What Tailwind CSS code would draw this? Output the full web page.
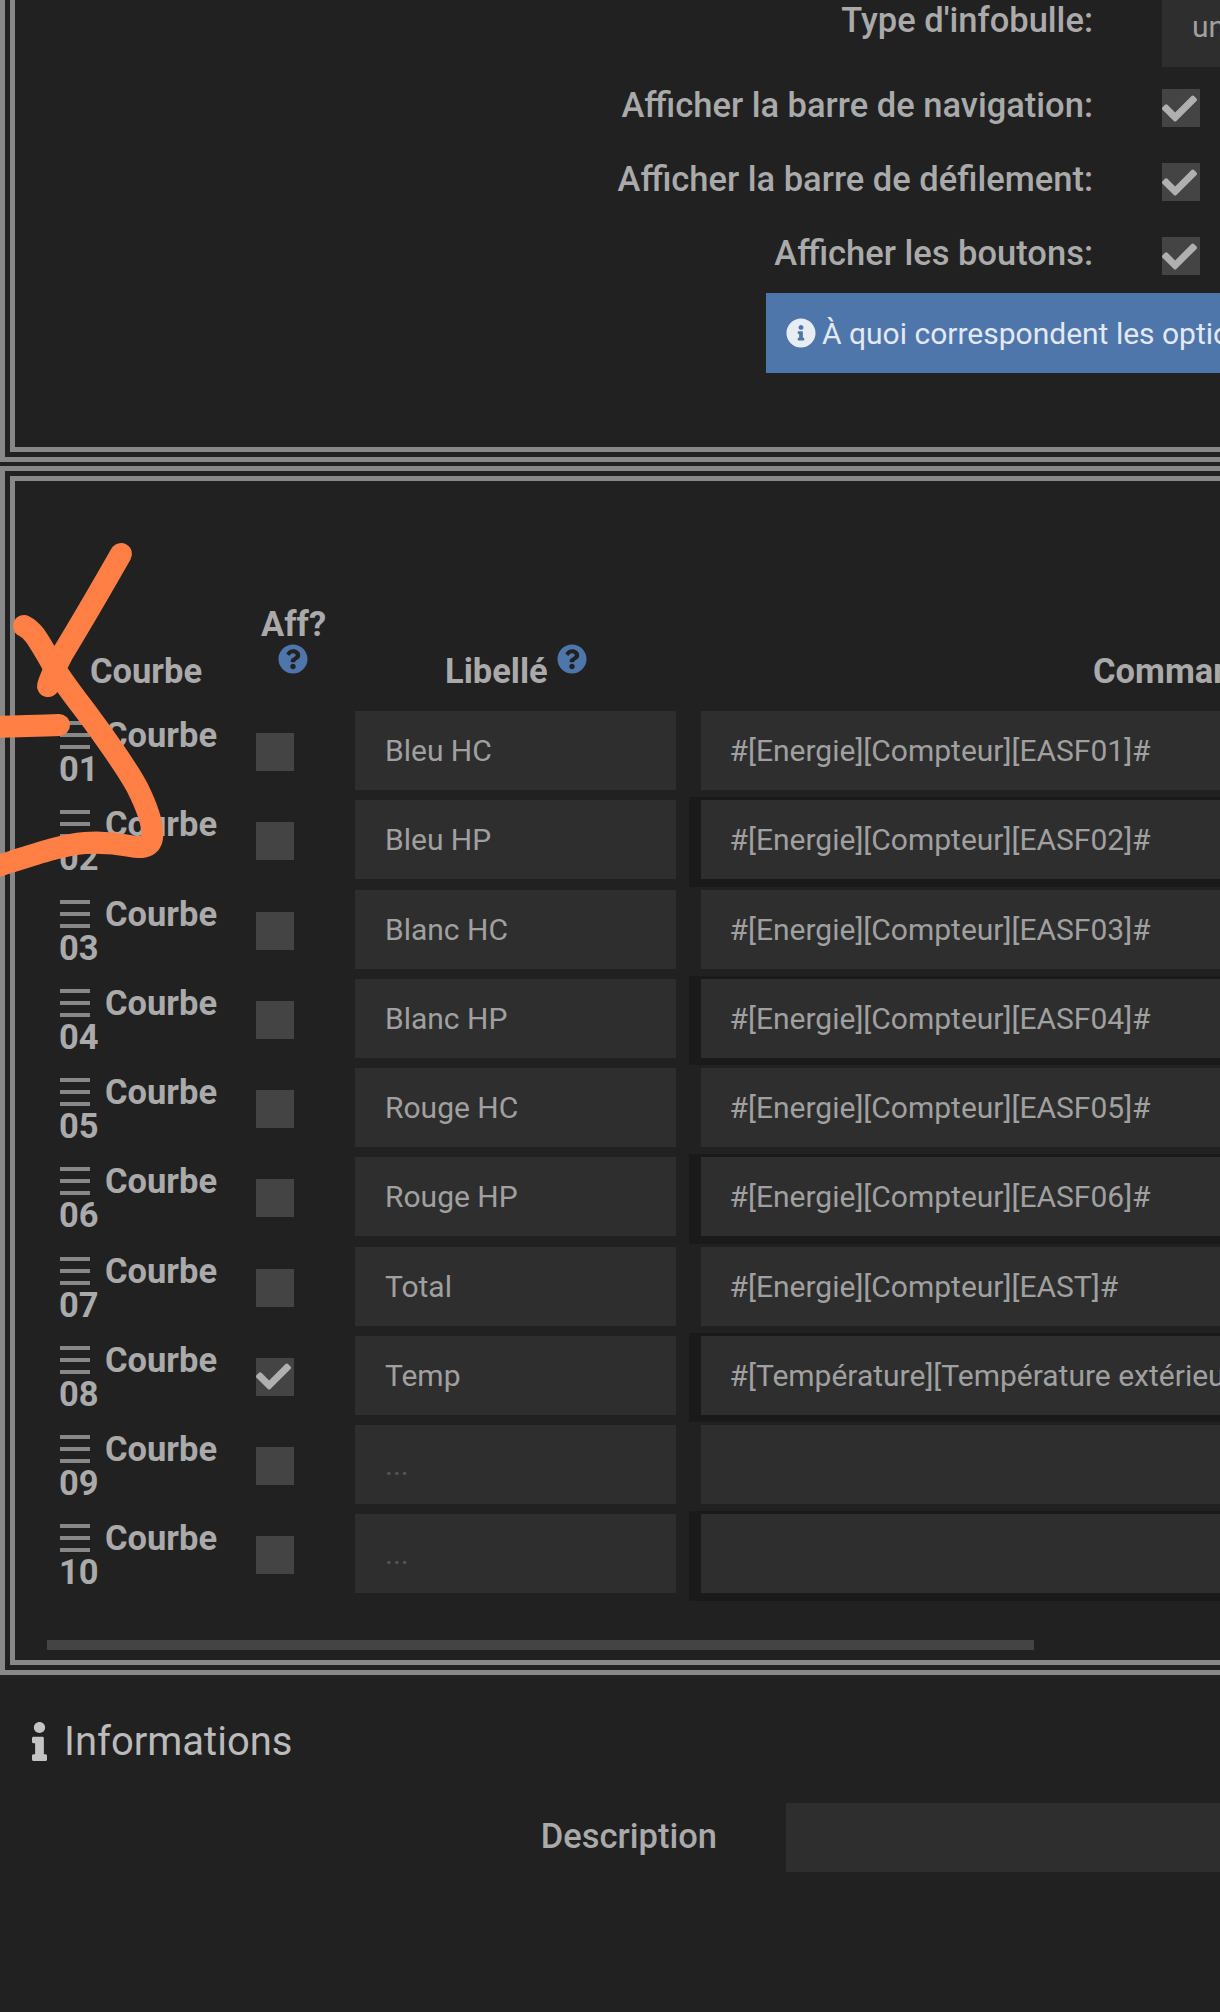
<!DOCTYPE html>
<html lang="fr">
<head>
    <meta charset="UTF-8">
    <title>Courbes</title>
    <script src="https://cdn.jsdelivr.net/npm/@tailwindcss/browser@4"></script>
</head>
<body class="relative w-[1220px] h-[2012px] overflow-hidden bg-[#212121] text-[#aaa] font-['Roboto',sans-serif]">
    <div class="w-[1500px]">
        <!-- Options -->
        <div class="h-[462px] border-x-[5px] border-b-[5px] border-[#888] px-[5px] pb-[5px]">
            <div class="h-[452px] border-x-[5px] border-b-[5px] border-[#888]">
                <div class="flex h-[89px] items-start">
                    <div class="w-[1078px] pt-[2px] text-right text-[34.5px] font-medium leading-[36px]">Type d'infobulle:</div>
                    <div class="ml-[69px] h-[67px] w-[300px] bg-[#2e2e2e] pl-[30px] pt-[9px] text-[30px] leading-[36px] text-[#a0a0a0]">une</div>
                </div>
                <div id="optionRows"></div>
                <div class="ml-[751px] mt-[-18px] flex h-[80px] w-[700px] items-center bg-[#4e76aa] pl-[20px] text-[30px] text-[#e3e9f2]">
                    <svg class="mr-[6px] h-[30px] w-[30px]" viewBox="0 0 512 512" fill="#e8edf4"><path d="M256 8C119.043 8 8 119.083 8 256c0 136.997 111.043 248 248 248s248-111.003 248-248C504 119.083 392.957 8 256 8zm0 110c23.196 0 42 18.804 42 42s-18.804 42-42 42-42-18.804-42-42 18.804-42 42-42zm56 254c0 6.627-5.373 12-12 12h-88c-6.627 0-12-5.373-12-12v-24c0-6.627 5.373-12 12-12h12v-64h-12c-6.627 0-12-5.373-12-12v-24c0-6.627 5.373-12 12-12h64c6.627 0 12 5.373 12 12v100h12c6.627 0 12 5.373 12 12v24z"/></svg>
                    À quoi correspondent les options
                </div>
            </div>
        </div>

        <!-- Courbes -->
        <div class="mt-[4px] h-[1209px] border-[5px] border-[#888] p-[5px]">
            <div class="h-[1189px] border-[5px] border-[#888] pl-[32px]">
                <div class="flex h-[228px] items-end pb-[20px] text-[34.5px] font-bold leading-[36px]">
                    <div class="w-[198px] pl-[43px]">Courbe</div>
                    <div class="w-[100px] pl-[16px]">
                        <div class="mb-[2px]">Aff?</div>
                        <svg class="ml-[17px] h-[30px] w-[30px] mb-[15px]" viewBox="0 0 512 512" fill="#4e76aa"><path d="M504 256c0 136.997-111.043 248-248 248S8 392.997 8 256C8 119.083 119.043 8 256 8s248 111.083 248 248zM262.655 90c-54.497 0-89.255 22.957-116.549 63.758-3.536 5.286-2.353 12.415 2.715 16.258l34.699 26.31c5.205 3.947 12.621 3.008 16.665-2.122 17.864-22.658 30.113-35.797 57.303-35.797 20.429 0 45.698 13.148 45.698 32.958 0 14.976-12.363 22.667-32.534 33.976C247.128 238.528 216 254.941 216 296v4c0 6.627 5.373 12 12 12h56c6.627 0 12-5.373 12-12v-1.333c0-28.462 83.186-29.647 83.186-106.667 0-58.002-60.165-102-116.531-102zM256 338c-25.916 0-47 21.084-47 47 0 25.915 21.084 47 47 47s47-21.085 47-47c0-25.916-21.084-47-47-47z"/></svg>
                    </div>
                    <div class="relative w-[344px] pl-[100px]">
                        Libellé
                        <svg class="absolute left-[212px] top-[-9px] h-[30px] w-[30px]" viewBox="0 0 512 512" fill="#4e76aa"><path d="M504 256c0 136.997-111.043 248-248 248S8 392.997 8 256C8 119.083 119.043 8 256 8s248 111.083 248 248zM262.655 90c-54.497 0-89.255 22.957-116.549 63.758-3.536 5.286-2.353 12.415 2.715 16.258l34.699 26.31c5.205 3.947 12.621 3.008 16.665-2.122 17.864-22.658 30.113-35.797 57.303-35.797 20.429 0 45.698 13.148 45.698 32.958 0 14.976-12.363 22.667-32.534 33.976C247.128 238.528 216 254.941 216 296v4c0 6.627 5.373 12 12 12h56c6.627 0 12-5.373 12-12v-1.333c0-28.462 83.186-29.647 83.186-106.667 0-58.002-60.165-102-116.531-102zM256 338c-25.916 0-47 21.084-47 47 0 25.915 21.084 47 47 47s47-21.085 47-47c0-25.916-21.084-47-47-47z"/></svg>
                    </div>
                    <div class="pl-[404px]">Commande</div>
                </div>
                <div id="curveRows" class="mt-[-1px]"></div>
                <div class="mt-[39px] h-[10px] w-[987px] bg-[#444]"></div>
            </div>
        </div>

        <!-- Informations -->
        <div class="ml-[32px] mt-[47px] flex items-center text-[40px] leading-[39px] text-[#bbb]">
            <svg class="mr-[17px] h-[39px] w-[15px]" viewBox="0 0 192 512" fill="#c4c4c4" preserveAspectRatio="none"><path d="M20 424.229h20V279.771H20c-11.046 0-20-8.954-20-20V212c0-11.046 8.954-20 20-20h112c11.046 0 20 8.954 20 20v212.229h20c11.046 0 20 8.954 20 20V492c0 11.046-8.954 20-20 20H20c-11.046 0-20-8.954-20-20v-47.771c0-11.046 8.954-20 20-20zM96 0C56.235 0 24 32.235 24 72s32.235 72 72 72 72-32.235 72-72S135.764 0 96 0z"/></svg>
            Informations
        </div>
        <div class="mt-[42px] flex items-center">
            <div class="w-[717px] pb-[1px] text-right text-[34.5px] font-medium">Description</div>
            <div class="ml-[69px] h-[69px] w-[600px] bg-[#2e2e2e]"></div>
        </div>
    </div>

    <!-- Annotation -->
    <svg class="absolute left-0 top-0 h-[2012px] w-[1220px]" viewBox="0 0 1220 2012" fill="none" stroke="#ff7f45" stroke-width="22" stroke-linecap="round" stroke-linejoin="round">
        <path d="M121 554 C105 582 80 625 63 653 C55 668 50 678 48 686"/>
        <path d="M24 626 C34 631 38 640 50 660 C60 680 80 703 92 720 C105 738 125 765 137 787 C146 805 154 825 152 838 C150 848 140 848 130 846 C115 843 100 842 85 843 C60 845 30 856 -5 867"/>
        <path d="M-5 727 C20 726 40 726 59 725"/>
    </svg>

    <script>
        const checkIcon = `<svg class="h-[35px] w-[35px]" viewBox="0 0 512 512" fill="#b0b0b0"><path d="M173.898 439.404l-166.4-166.4c-9.997-9.997-9.997-26.206 0-36.204l36.203-36.204c9.997-9.998 26.207-9.998 36.204 0L192 312.69 432.095 72.596c9.997-9.997 26.207-9.997 36.204 0l36.203 36.204c9.997 9.997 9.997 26.206 0 36.204l-294.4 294.401c-9.998 9.997-26.207 9.997-36.204-.001z"/></svg>`;

        const options = ['Afficher la barre de navigation:', 'Afficher la barre de défilement:', 'Afficher les boutons:'];
        document.getElementById('optionRows').innerHTML = options.map(label => `
            <div class="flex h-[74px] items-start">
                <div class="mt-[-2px] w-[1078px] text-right text-[34.5px] font-medium leading-[36px]">${label}</div>
                <div class="ml-[69px] flex h-[38px] w-[38px] items-center justify-start bg-[#444]">${checkIcon}</div>
            </div>
        `).join('');

        const curves = [
            ['01', 'Bleu HC', '#[Energie][Compteur][EASF01]#'],
            ['02', 'Bleu HP', '#[Energie][Compteur][EASF02]#'],
            ['03', 'Blanc HC', '#[Energie][Compteur][EASF03]#'],
            ['04', 'Blanc HP', '#[Energie][Compteur][EASF04]#'],
            ['05', 'Rouge HC', '#[Energie][Compteur][EASF05]#'],
            ['06', 'Rouge HP', '#[Energie][Compteur][EASF06]#'],
            ['07', 'Total', '#[Energie][Compteur][EAST]#'],
            ['08', 'Temp', '#[Température][Température extérieure]#'],
            ['09', '', ''],
            ['10', '', '']
        ];
        document.getElementById('curveRows').innerHTML = curves.map((c, i) => `
            <div class="flex h-[89.25px]">
                <div class="w-[198px] pl-[12px] pt-[10px] text-[34.5px] font-bold leading-[34px]">
                    <div class="flex items-center">
                        <div class="ml-[1px] mr-[15px] flex h-[28px] w-[30px] flex-col justify-between">
                            <div class="h-[4px] bg-[#888]"></div>
                            <div class="h-[4px] bg-[#888]"></div>
                            <div class="h-[4px] bg-[#888]"></div>
                        </div>
                        Courbe
                    </div>
                    <div>${c[0]}</div>
                </div>
                <div class="w-[100px] pl-[11px] pt-[25px]">
                    <div class="flex h-[38px] w-[38px] items-center bg-[#444]">${i === 7 ? checkIcon : ''}</div>
                </div>
                <div class="w-[344px] pl-[10px] pt-[3px]">
                    <input type="text" value="${c[1]}" placeholder="..." class="h-[79px] w-[321px] bg-[#2e2e2e] px-[30px] text-[30px] text-[#a0a0a0] outline-none placeholder:text-[#555]">
                </div>
                <div class="flex-1 pl-[11.5px] pt-[3px] ${i % 2 ? 'bg-[#1a1a1a]' : ''}">
                    <input type="text" value="${c[2]}" class="h-[79px] w-full bg-[#2e2e2e] px-[29px] text-[30px] text-[#a0a0a0] outline-none">
                </div>
            </div>
        `).join('');
    </script>
</body>
</html>
